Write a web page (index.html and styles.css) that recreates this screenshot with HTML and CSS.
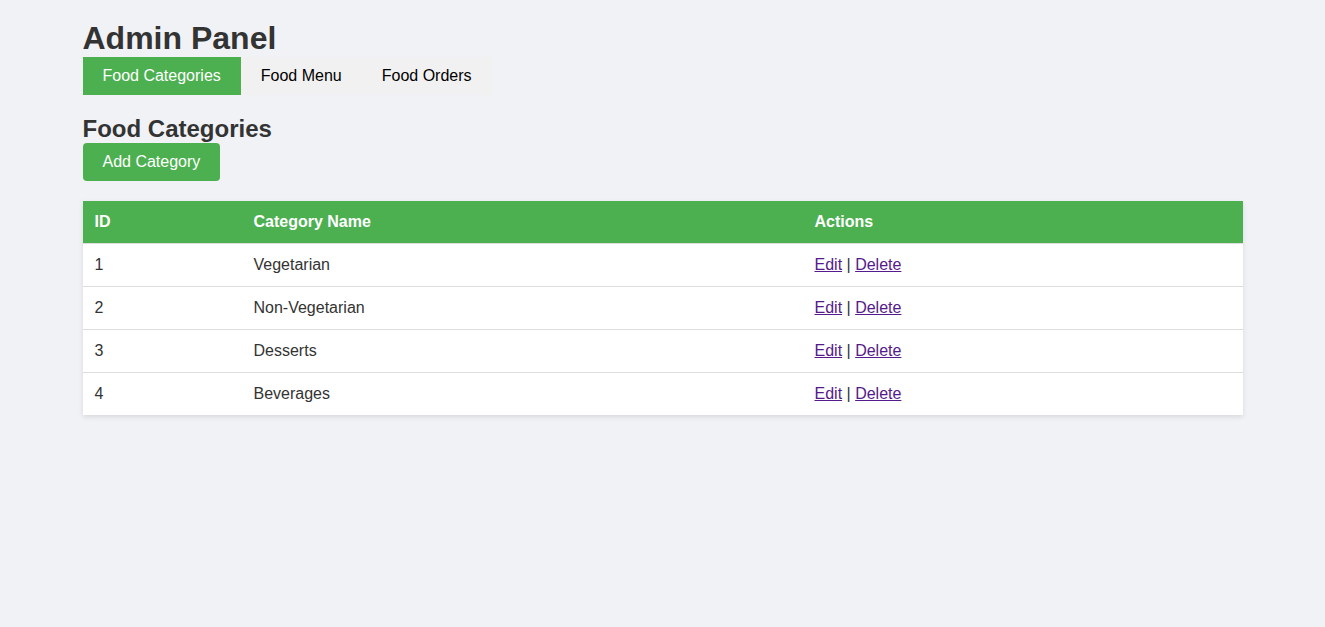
FILE: index.html
```html
<!DOCTYPE html>
<html lang="en">
<head>
<meta charset="utf-8">
<title>Admin Panel</title>
<link rel="stylesheet" href="styles.css">
</head>
<body>
<div class="container">
  <h1 class="title">Admin Panel</h1>
  <nav class="tabs">
    <a class="tab active" href="#">Food Categories</a>
    <a class="tab" href="#">Food Menu</a>
    <a class="tab" href="#">Food Orders</a>
  </nav>
  <h2 class="section-title">Food Categories</h2>
  <button class="btn">Add Category</button>
  <table class="data-table">
    <colgroup>
      <col class="col-id">
      <col class="col-name">
      <col class="col-actions">
    </colgroup>
    <thead>
      <tr><th>ID</th><th>Category Name</th><th>Actions</th></tr>
    </thead>
    <tbody>
      <tr><td>1</td><td>Vegetarian</td><td><a class="link" href="#">Edit</a> | <a class="link" href="#">Delete</a></td></tr>
      <tr><td>2</td><td>Non-Vegetarian</td><td><a class="link" href="#">Edit</a> | <a class="link" href="#">Delete</a></td></tr>
      <tr><td>3</td><td>Desserts</td><td><a class="link" href="#">Edit</a> | <a class="link" href="#">Delete</a></td></tr>
      <tr><td>4</td><td>Beverages</td><td><a class="link" href="#">Edit</a> | <a class="link" href="#">Delete</a></td></tr>
    </tbody>
  </table>
</div>
</body>
</html>
```
FILE: styles.css
```css
* { box-sizing: border-box; }
html, body { margin: 0; }
body {
  background: #f0f2f5;
  color: #333;
  font-family: "Liberation Sans", Arial, sans-serif;
  font-size: 16px;
  padding: 20px;
}
.container {
  max-width: 1160px;
  margin: 0 auto;
}
.title {
  margin: 0;
  font-size: 32px;
  font-weight: bold;
  line-height: 37px;
}
.tabs {
  display: inline-flex;
  background: #f1f1f1;
}
.tab {
  display: block;
  padding: 10px 20px;
  line-height: 18px;
  color: #000;
  text-decoration: none;
}
.tab.active {
  background: #4caf50;
  color: #fff;
}
.section-title {
  margin: 20px 0 0;
  font-size: 24px;
  line-height: 28px;
  font-weight: bold;
}
.btn {
  display: block;
  background: #4caf50;
  color: #fff;
  border: none;
  border-radius: 4px;
  padding: 10px 20px;
  font-family: inherit;
  font-size: 16px;
  line-height: 18px;
  cursor: pointer;
}
.data-table {
  margin-top: 20px;
  width: 100%;
  border-collapse: collapse;
  background: #fff;
  box-shadow: 0 2px 5px rgba(0,0,0,0.1);
  table-layout: fixed;
}
.col-id { width: 159px; }
.col-name { width: 561px; }
.col-actions { width: 440px; }
.data-table th,
.data-table td {
  text-align: left;
  padding: 12px;
  line-height: 18px;
  border-bottom: 1px solid #ddd;
}
.data-table th {
  background: #4caf50;
  color: #fff;
  font-weight: bold;
}
.data-table tbody tr:last-child td {
  border-bottom: none;
}
.link {
  color: #551a8b;
  text-decoration: underline;
}
```
